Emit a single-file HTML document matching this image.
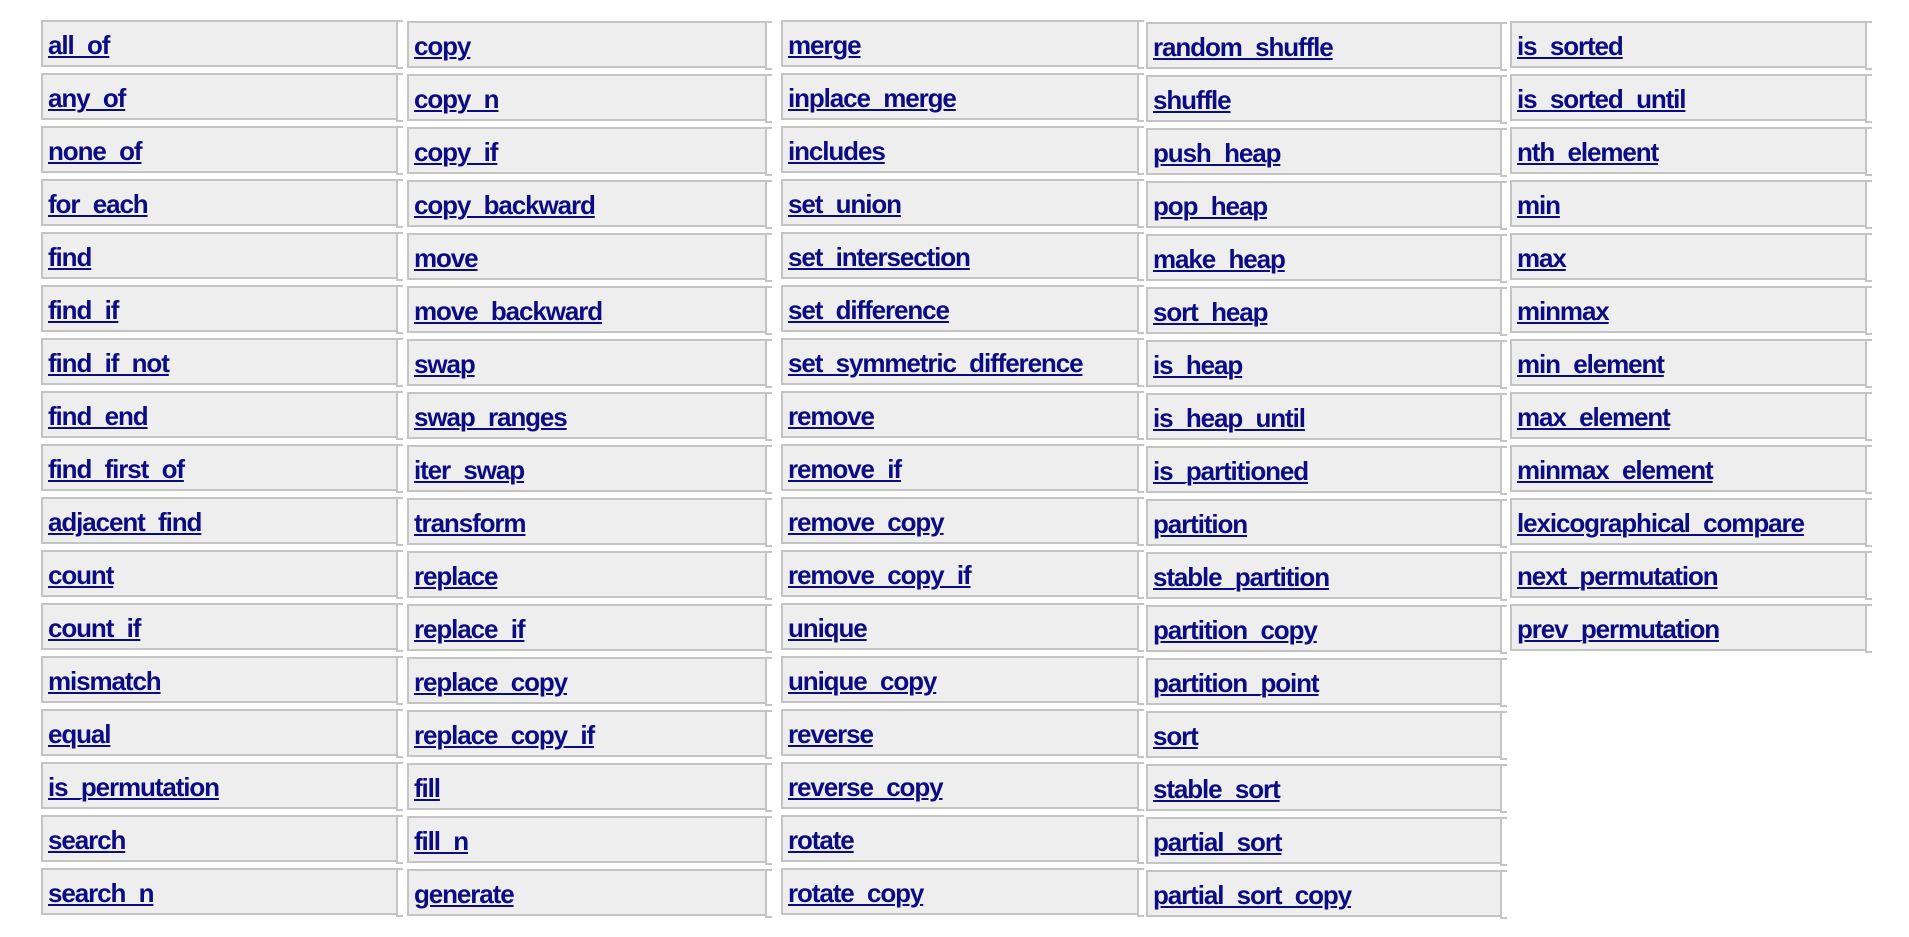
<!DOCTYPE html>
<html><head><meta charset="utf-8"><style>
html,body{margin:0;padding:0;background:#fff;width:1909px;height:937px;overflow:hidden}
.b{position:absolute;height:43px;background:#eee;border:2px solid #c4c4c4;box-sizing:content-box}
.b:after{content:"";position:absolute;right:-7px;top:-2px;width:5px;height:45px;border-left:2px solid #c4c4c4;border-top:2px solid #c4c4c4;border-bottom:2px solid #c4c4c4;border-right:none}
.b a{position:absolute;left:5px;top:8px;font:bold 26px "Liberation Sans",sans-serif;letter-spacing:-1.1px;color:#0b0b82;text-decoration:underline;text-decoration-thickness:2px;text-underline-offset:2px;white-space:nowrap}
</style></head><body>
<div id="root"></div>
<script>
var cols=[
[41,353,20,["all_of","any_of","none_of","for_each","find","find_if","find_if_not","find_end","find_first_of","adjacent_find","count","count_if","mismatch","equal","is_permutation","search","search_n"]],
[407,356,21,["copy","copy_n","copy_if","copy_backward","move","move_backward","swap","swap_ranges","iter_swap","transform","replace","replace_if","replace_copy","replace_copy_if","fill","fill_n","generate"]],
[781,354,20,["merge","inplace_merge","includes","set_union","set_intersection","set_difference","set_symmetric_difference","remove","remove_if","remove_copy","remove_copy_if","unique","unique_copy","reverse","reverse_copy","rotate","rotate_copy"]],
[1146,352,22,["random_shuffle","shuffle","push_heap","pop_heap","make_heap","sort_heap","is_heap","is_heap_until","is_partitioned","partition","stable_partition","partition_copy","partition_point","sort","stable_sort","partial_sort","partial_sort_copy"]],
[1510,353,21,["is_sorted","is_sorted_until","nth_element","min","max","minmax","min_element","max_element","minmax_element","lexicographical_compare","next_permutation","prev_permutation"]]];
var h="";
cols.forEach(function(c){c[3].forEach(function(n,i){
h+='<div class="b" style="left:'+c[0]+'px;top:'+Math.round(c[2]+i*53)+'px;width:'+c[1]+'px"><a>'+n+'</a></div>';});});
document.getElementById("root").innerHTML=h;
</script>
</body></html>
